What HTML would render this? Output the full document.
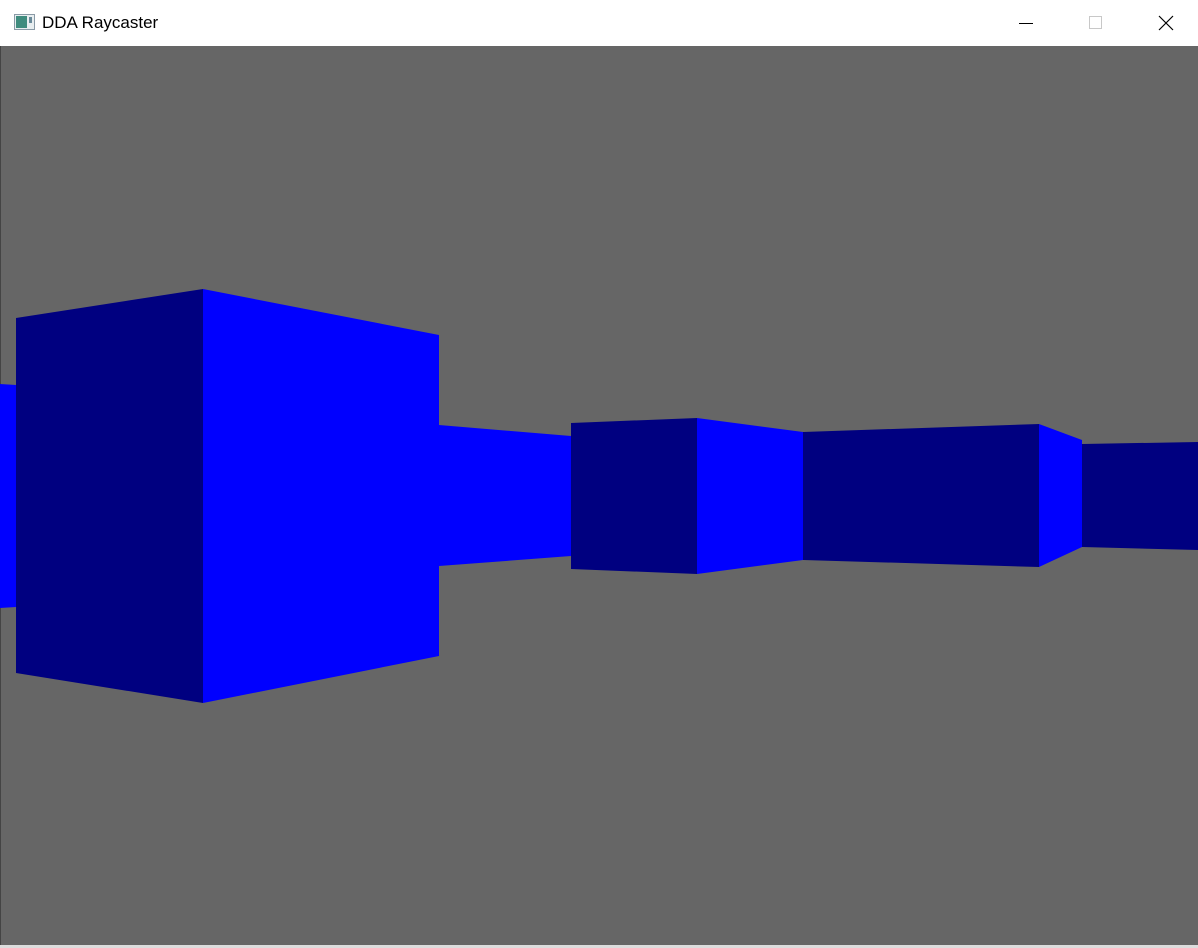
<!DOCTYPE html>
<html><head><style>
body{margin:0;width:1198px;height:948px;overflow:hidden;background:#fff;font-family:"Liberation Sans",sans-serif}
.tb{position:absolute;left:0;top:0;width:1198px;height:46px;background:#fff}
.title{position:absolute;left:42px;top:13px;font-size:17px;color:#000}
.view{position:absolute;left:0;top:46px}
</style></head><body>
<div class="tb">
<svg width="1198" height="46" style="position:absolute;left:0;top:0">
<rect x="14.5" y="14.5" width="20" height="15" fill="#e8eef0" stroke="#8a9aa6"/>
<rect x="16" y="16" width="11" height="12" fill="#3f8c7e"/>
<rect x="29" y="17" width="3" height="6" fill="#6a8a9a"/>
<line x1="1019" y1="23.5" x2="1033" y2="23.5" stroke="#000" stroke-width="1"/>
<rect x="1089.5" y="16.5" width="12" height="12" fill="none" stroke="#c8c8c8"/>
<path d="M1159 16 L1173 30 M1173 16 L1159 30" stroke="#000" stroke-width="1.2"/>
</svg>
<div class="title">DDA Raycaster</div>
</div>
<svg class="view" width="1198" height="902" viewBox="0 46 1198 902">
<rect x="0" y="46" width="1198" height="902" fill="#666"/>
<rect x="0" y="46" width="1" height="902" fill="#444"/>
<polygon points="0,384 16,385 16,607 0,608" fill="#0000ff"/>
<polygon points="439,425 571,436 571,556 439,566" fill="#0000ff"/>
<polygon points="16,318 203,289 203,703 16,673" fill="#000080"/>
<polygon points="203,289 439,335 439,656 203,703" fill="#0000ff"/>
<polygon points="571,423 697,418 697,574 571,569" fill="#000080"/>
<polygon points="697,418 803,432 803,560 697,574" fill="#0000ff"/>
<polygon points="803,432 1039,424 1039,567 803,560" fill="#000080"/>
<polygon points="1039,424 1082,440 1082,547 1039,567" fill="#0000ff"/>
<polygon points="1082,444 1198,442 1198,550 1082,547" fill="#000080"/>
<rect x="0" y="945" width="1198" height="3" fill="#ddd"/>
</svg>
</body></html>
